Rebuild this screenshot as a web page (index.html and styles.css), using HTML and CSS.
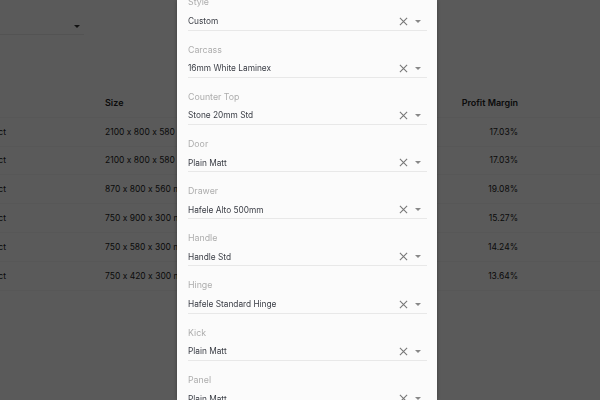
FILE: index.html
```html
<!DOCTYPE html>
<html>
<head>
<meta charset="utf-8">
<link rel="stylesheet" href="styles.css">
</head>
<body>
<div class="page">
  <div class="topbar">
    <div class="select-stub"><span class="bg-caret"></span></div>
  </div>
  <div class="table">
    <div class="row head">
      <div class="c-name"></div>
      <div class="c-size">Size</div>
      <div class="c-mid"></div>
      <div class="c-margin">Profit Margin</div>
    </div>
    <div class="row"><div class="c-name"><span>Product</span></div><div class="c-size">2100 x 800 x 580 mm</div><div class="c-mid"></div><div class="c-margin">17.03%</div></div>
    <div class="row"><div class="c-name"><span>Product</span></div><div class="c-size">2100 x 800 x 580 mm</div><div class="c-mid"></div><div class="c-margin">17.03%</div></div>
    <div class="row"><div class="c-name"><span>Product</span></div><div class="c-size">870 x 800 x 560 mm</div><div class="c-mid"></div><div class="c-margin">19.08%</div></div>
    <div class="row"><div class="c-name"><span>Product</span></div><div class="c-size">750 x 900 x 300 mm</div><div class="c-mid"></div><div class="c-margin">15.27%</div></div>
    <div class="row"><div class="c-name"><span>Product</span></div><div class="c-size">750 x 580 x 300 mm</div><div class="c-mid"></div><div class="c-margin">14.24%</div></div>
    <div class="row"><div class="c-name"><span>Product</span></div><div class="c-size">750 x 420 x 300 mm</div><div class="c-mid"></div><div class="c-margin">13.64%</div></div>
  </div>
</div>

<div class="overlay">
  <div class="panel">
    <div class="fields">
      <div class="field"><div class="label">Style</div><div class="value"><span class="text">Custom</span><span class="clear"><svg viewBox="0 0 10 10"><path d="M1 1L9 9M9 1L1 9"/></svg></span><span class="caret"></span></div></div>
      <div class="field"><div class="label">Carcass</div><div class="value"><span class="text">16mm White Laminex</span><span class="clear"><svg viewBox="0 0 10 10"><path d="M1 1L9 9M9 1L1 9"/></svg></span><span class="caret"></span></div></div>
      <div class="field"><div class="label">Counter Top</div><div class="value"><span class="text">Stone 20mm Std</span><span class="clear"><svg viewBox="0 0 10 10"><path d="M1 1L9 9M9 1L1 9"/></svg></span><span class="caret"></span></div></div>
      <div class="field"><div class="label">Door</div><div class="value"><span class="text">Plain Matt</span><span class="clear"><svg viewBox="0 0 10 10"><path d="M1 1L9 9M9 1L1 9"/></svg></span><span class="caret"></span></div></div>
      <div class="field"><div class="label">Drawer</div><div class="value"><span class="text">Hafele Alto 500mm</span><span class="clear"><svg viewBox="0 0 10 10"><path d="M1 1L9 9M9 1L1 9"/></svg></span><span class="caret"></span></div></div>
      <div class="field"><div class="label">Handle</div><div class="value"><span class="text">Handle Std</span><span class="clear"><svg viewBox="0 0 10 10"><path d="M1 1L9 9M9 1L1 9"/></svg></span><span class="caret"></span></div></div>
      <div class="field"><div class="label">Hinge</div><div class="value"><span class="text">Hafele Standard Hinge</span><span class="clear"><svg viewBox="0 0 10 10"><path d="M1 1L9 9M9 1L1 9"/></svg></span><span class="caret"></span></div></div>
      <div class="field"><div class="label">Kick</div><div class="value"><span class="text">Plain Matt</span><span class="clear"><svg viewBox="0 0 10 10"><path d="M1 1L9 9M9 1L1 9"/></svg></span><span class="caret"></span></div></div>
      <div class="field"><div class="label">Panel</div><div class="value"><span class="text">Plain Matt</span><span class="clear"><svg viewBox="0 0 10 10"><path d="M1 1L9 9M9 1L1 9"/></svg></span><span class="caret"></span></div></div>
    </div>
  </div>
</div>
</body>
</html>
```

FILE: styles.css
```css
* { box-sizing: border-box; }
html, body { margin: 0; padding: 0; }
body {
  width: 600px;
  height: 400px;
  overflow: hidden;
  background: #fafafa;
  font-family: Inter, "Noto Sans", sans-serif;
  font-feature-settings: "calt" 0;
  color: #222;
}
.page { width: 600px; height: 400px; }
.topbar { height: 89px; padding-top: 19px; }
.select-stub {
  width: 84px;
  height: 16px;
  border-bottom: 1px solid #e6e6e6;
  display: flex;
  justify-content: flex-end;
  align-items: center;
  padding-right: 4px;
}
.bg-caret {
  width: 0; height: 0;
  border-left: 3px solid transparent;
  border-right: 3px solid transparent;
  border-top: 3px solid #333;
}
.table { font-size: 8.5px; }
.row {
  display: flex;
  align-items: center;
  height: 28.8px;
  border-bottom: 1px solid #f0f0f0;
}
.row.head { font-weight: 600; font-size: 9px; }
.c-name { width: 105px; }
.c-name span {
  display: block;
  width: 6px;
  direction: rtl;
  white-space: nowrap;
}
.c-size { width: 200px; }
.c-mid { width: 153px; }
.c-margin { width: 60px; text-align: right; }

.overlay {
  position: fixed;
  inset: 0;
  background: rgba(0, 0, 0, 0.64);
  display: flex;
  justify-content: center;
}
.panel {
  width: 260px;
  height: 400px;
  margin-left: 14px;
  background: #fbfbfb;
  box-shadow: 0 0 4px rgba(0, 0, 0, 0.35);
  overflow: hidden;
  padding: 0 10px 0 11px;
}
.fields { margin-top: -3.7px; }
.field { margin-bottom: 13px; }
.label {
  font-size: 8.8px;
  line-height: 12px;
  color: #adadad;
  margin-bottom: 4.2px;
}
.value {
  height: 18px;
  border-bottom: 1px solid #e8e8e8;
  display: flex;
  align-items: center;
  font-size: 8.3px;
  color: #3a3d45;
  padding-right: 6px;
}
.text { flex: 1; white-space: nowrap; }
.clear { width: 10px; height: 10px; display: flex; margin-right: 7px; }
.clear svg { width: 9px; height: 9px; margin: auto; }
.clear path { stroke: #777; stroke-width: 1.2; fill: none; }
.caret {
  width: 0; height: 0;
  border-left: 3px solid transparent;
  border-right: 3px solid transparent;
  border-top: 3px solid #888;
}
```
